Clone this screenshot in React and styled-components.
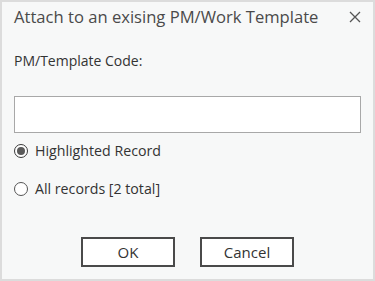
import { useState } from "react";
import styled, { createGlobalStyle } from "styled-components";

const GlobalStyle = createGlobalStyle`
    * {
        box-sizing: border-box;
    }
    body {
        margin: 0;
        background: #f7f8f8;
        font-family: "Open Sans", "Noto Sans", sans-serif;
    }
`;

const AttachDialog = () => {
    const [code, setCode] = useState("");
    const [scope, setScope] = useState("highlighted");

    const options = [
        { value: "highlighted", label: "Highlighted Record" },
        { value: "all", label: "All records [2 total]" }
    ];

    return (
        <Dialog>
            <GlobalStyle />
            <Header>
                <Title>Attach to an exising PM/Work Template</Title>
                <CloseButton aria-label="Close">
                    <svg width="12" height="12" viewBox="0 0 12 12">
                        <path d="M1 1 L11 11 M11 1 L1 11" stroke="#555" strokeWidth="1.3" fill="none" />
                    </svg>
                </CloseButton>
            </Header>
            <Label htmlFor="pm-code">PM/Template Code:</Label>
            <CodeInput id="pm-code" value={code} onChange={(e) => setCode(e.target.value)} />
            <Options>
                {options.map((opt) => (
                    <RadioRow key={opt.value} onClick={() => setScope(opt.value)}>
                        <RadioCircle checked={scope === opt.value} />
                        {opt.label}
                    </RadioRow>
                ))}
            </Options>
            <Buttons>
                <Button>OK</Button>
                <Button>Cancel</Button>
            </Buttons>
        </Dialog>
    );
};

const Dialog = styled.div`
    width: 375px;
    height: 281px;
    border: 2px solid #dcdcdc;
    background: #f7f8f8;
    padding: 3px 12px 0 12px;
    display: flex;
    flex-direction: column;
    color: #333;
`;

const Header = styled.div`
    display: flex;
    align-items: center;
    justify-content: space-between;
    height: 24px;
`;

const Title = styled.div`
    font-size: 16.6px;
    line-height: 24px;
    color: #4a4a4a;
`;

const CloseButton = styled.button`
    border: none;
    background: none;
    padding: 0;
    width: 12px;
    height: 12px;
    display: flex;
    cursor: pointer;
`;

const Label = styled.label`
    margin-top: 22px;
    font-size: 14px;
    line-height: 20px;
`;

const CodeInput = styled.input`
    margin-top: 25px;
    height: 37px;
    width: 100%;
    border: 1px solid #a8a8a8;
    background: #fff;
    outline: none;
    padding: 0 6px;
    font: inherit;
    font-size: 14px;
`;

const Options = styled.div`
    margin-top: 8px;
    display: flex;
    flex-direction: column;
    gap: 18px;
`;

const RadioRow = styled.div`
    display: flex;
    align-items: center;
    gap: 7px;
    font-size: 14.2px;
    line-height: 20px;
    cursor: pointer;
`;

const RadioCircle = styled.span`
    width: 14px;
    height: 14px;
    border-radius: 50%;
    border: 1px solid ${(p) => (p.checked ? "#3a3a3a" : "#555")};
    background: #fff;
    display: flex;
    align-items: center;
    justify-content: center;
    &::after {
        content: "";
        width: 8px;
        height: 8px;
        border-radius: 50%;
        background: #5a5a5a;
        display: ${(p) => (p.checked ? "block" : "none")};
    }
`;

const Buttons = styled.div`
    margin-top: 38px;
    display: flex;
    justify-content: center;
    gap: 25px;
`;

const Button = styled.button`
    width: 94px;
    height: 30px;
    border: 2px solid #4a4a4a;
    background: #fff;
    font-family: inherit;
    font-size: 15px;
    color: #333;
    padding: 0;
    cursor: pointer;
`;

export default AttachDialog;
